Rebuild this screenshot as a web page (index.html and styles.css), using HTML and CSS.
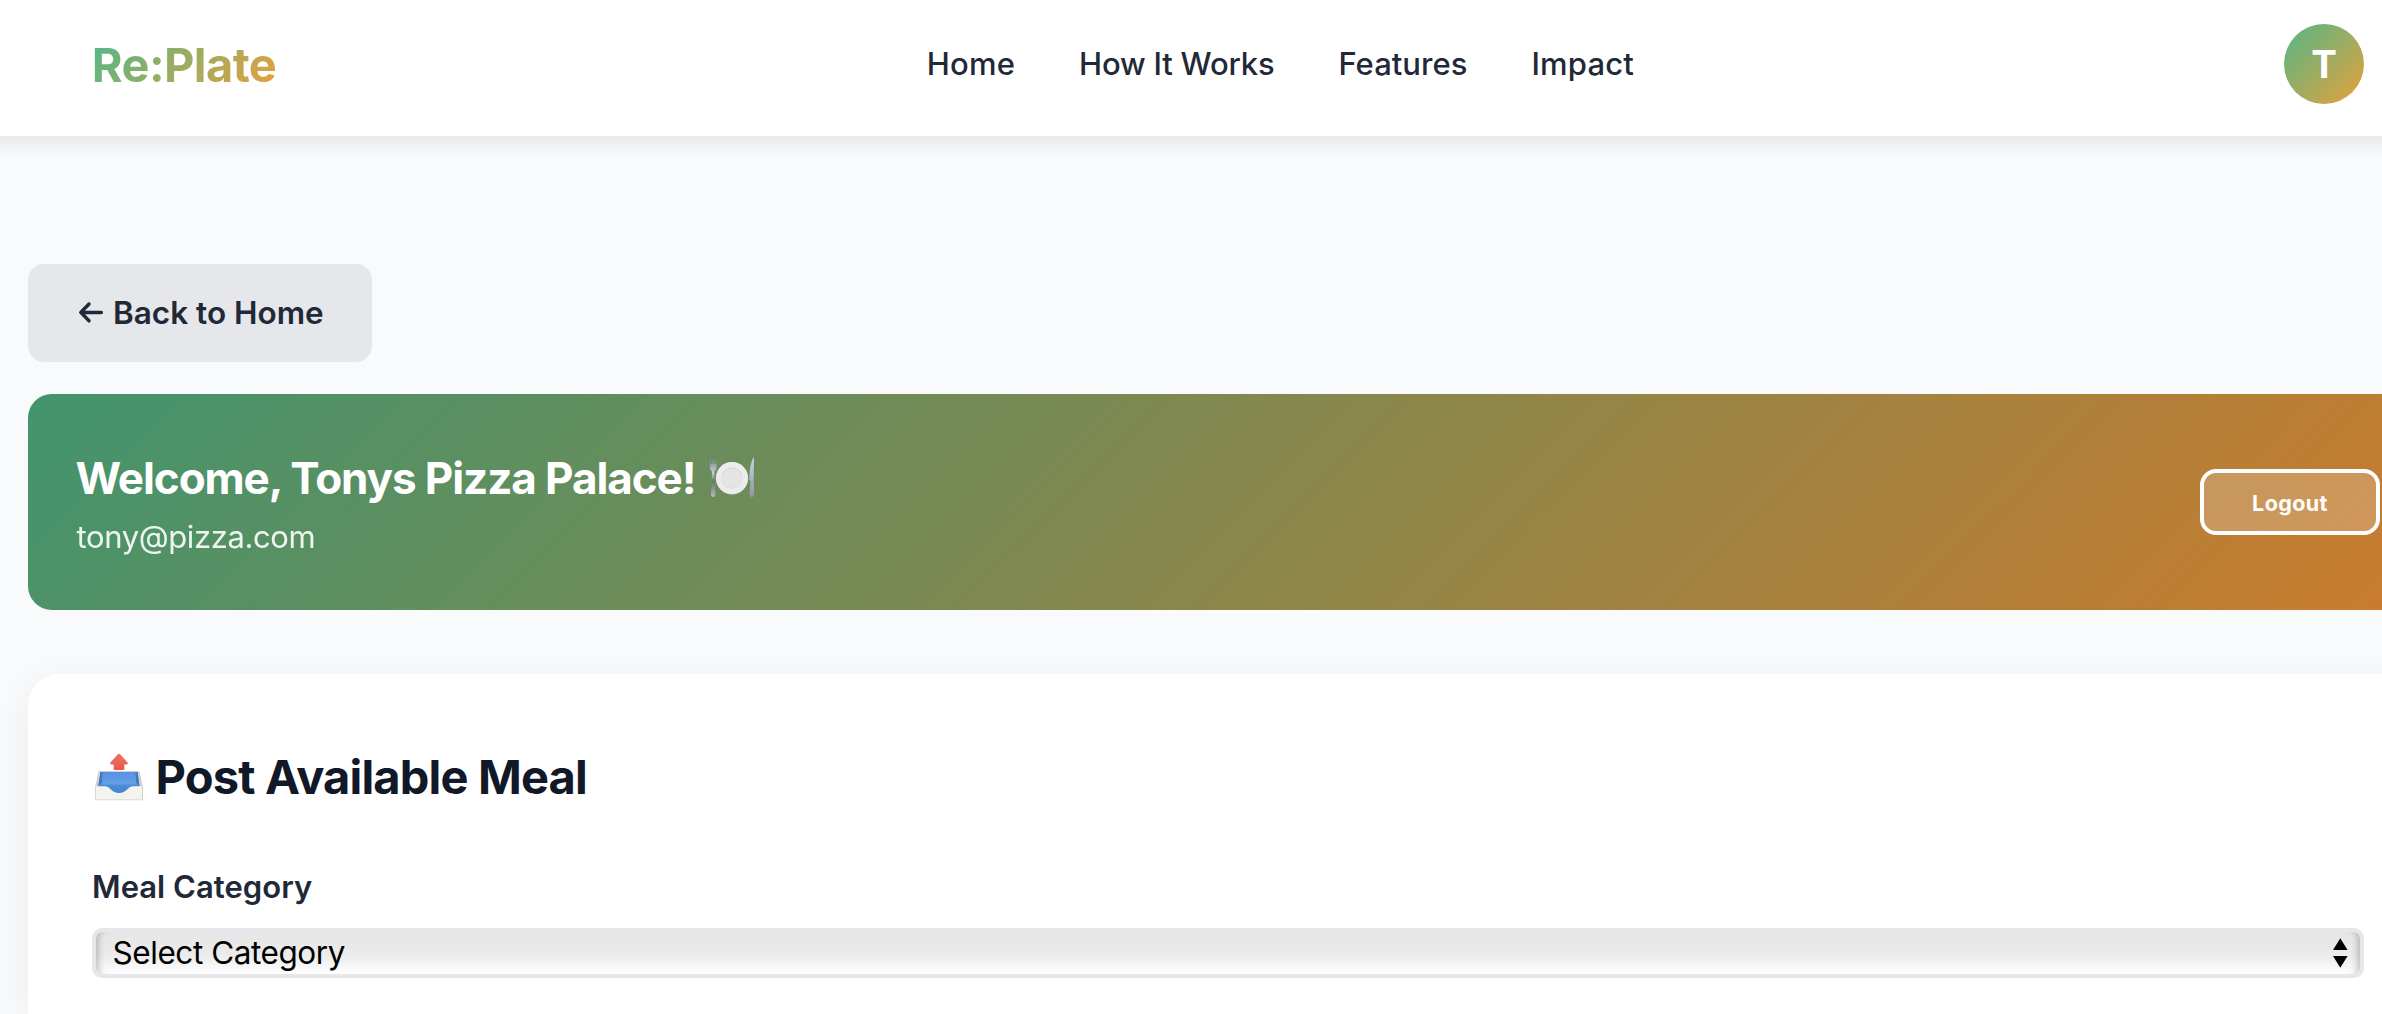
FILE: index.html
```
<!DOCTYPE html>
<html lang="en">
<head>
<meta charset="utf-8">
<title>Re:Plate</title>
<link rel="stylesheet" href="styles.css">
</head>
<body>
<header class="topbar">
  <div class="brand"><span class="logo">Re:Plate</span></div>
  <nav class="menu">
    <a class="menu-home">Home</a>
    <a class="menu-how">How It Works</a>
    <a class="menu-features">Features</a>
    <a class="menu-impact">Impact</a>
  </nav>
  <div class="avatar">T</div>
</header>

<main class="container">
  <button class="back" type="button">
    <svg class="back-arrow" viewBox="0 0 37 26" width="37" height="26" fill="none" stroke="currentColor" stroke-width="3.5" stroke-linecap="round" stroke-linejoin="round"><path d="M13 4 L4.8 12.4 L13 20.8 M5.5 12.4 H25.3"/></svg><span class="back-text">Back to Home</span>
  </button>

  <section class="banner">
    <div>
      <h1 class="welcome"><span>Welcome, Tonys Pizza Palace!</span>
        <svg class="plate" viewBox="0 0 46 42" width="46" height="42">
          <defs>
            <linearGradient id="metal" x1="0" y1="0" x2="0" y2="1"><stop offset="0" stop-color="#6d7a76"/><stop offset=".4" stop-color="#c4cfdf"/><stop offset=".6" stop-color="#6c746f"/><stop offset="1" stop-color="#b3b8c3"/></linearGradient>
            <linearGradient id="blade" x1="0" y1="0" x2="0" y2="1"><stop offset="0" stop-color="#c5d5e6"/><stop offset=".6" stop-color="#a5b1bd"/><stop offset="1" stop-color="#92959b"/></linearGradient>
          </defs>
          <path fill="url(#metal)" d="M.8 1 H1.9 V8 H2.9 V1 H3.9 V8 H4.9 V1 H5.9 V8 H6.8 V1 H7.6 V11.5 Q7.6 14 5.5 15 V26 L6.5 38.5 Q6.5 41 4.2 41 Q1.9 41 1.9 38.5 L2.9 26 V15 Q.8 14 .8 11.5Z"/>
          <circle cx="23" cy="22.3" r="16.2" fill="#c9ced0"/>
          <circle cx="23" cy="22" r="15.9" fill="#ececec"/>
          <circle cx="23" cy="22" r="10.6" fill="#d4dade"/>
          <circle cx="23" cy="22.4" r="9.8" fill="#e4e4e4"/>
          <path fill="url(#blade)" d="M45 1 Q40.5 6 40.2 24 L41.5 25 L40.6 39 Q40.6 41 42.7 41 Q45.2 41 45.2 39 L44.7 25Z"/>
        </svg>
      </h1>
      <p class="email">tony@pizza.com</p>
    </div>
    <button class="logout" type="button">Logout</button>
  </section>

  <section class="card">
    <h2 class="card-title">
      <svg class="tray" viewBox="0 0 48 48" width="48" height="48">
        <defs>
          <linearGradient id="arrow" x1="0" y1="0" x2="0" y2="1"><stop offset="0" stop-color="#ef7364"/><stop offset="1" stop-color="#e75849"/></linearGradient>
          <linearGradient id="well" x1="0" y1="0" x2="0" y2="1"><stop offset="0" stop-color="#5592e2"/><stop offset=".54" stop-color="#659fea"/><stop offset=".6" stop-color="#4e8bd8"/><stop offset="1" stop-color="#4481cf"/></linearGradient>
        </defs>
        <path fill="#d0d1cd" d="M3.5 18 H44.5 L48 34 V47.3 H.2 V34Z"/>
        <path fill="url(#well)" d="M5.5 19 H42.5 L44.5 33.5 L38 41 H10 L3.3 33.5Z"/>
        <path fill="#3f78c2" d="M5.5 19 L7.5 19 L6.8 30 L3.3 33Z M42.5 19 H40.5 L41.2 30 L44.5 33Z"/>
        <path fill="#f3f3ef" d="M1 33.2 H9.5 C15.5 33.2 16.5 40 24 40 C31.5 40 32.5 33.2 38.5 33.2 H47 V46.5 H1Z"/>
        <path fill="url(#arrow)" d="M24 .8 Q24.7 .8 25.4 1.6 L32.3 9.2 Q33.5 11 31.8 11.4 H29.3 V17 H18.7 V11.4 H16.2 Q14.5 11 15.7 9.2 L22.6 1.6 Q23.3 .8 24 .8Z"/>
      </svg><span>Post Available Meal</span>
    </h2>
    <div class="label">Meal Category</div>
    <div class="select">
      <span>Select Category</span>
      <svg viewBox="0 0 15 30" width="15" height="30"><path d="M7.3 .3 L14.6 12 H0Z M0 18 H14.6 L7.3 29.7Z"/></svg>
    </div>
  </section>
</main>
</body>
</html>
```
FILE: styles.css
```
* { box-sizing: border-box; }
body {
  display: flex;
  flex-direction: column;
  height: 1014px;
  margin: 0;
  overflow: hidden;
  background: #f9fafc;
  color: #1f2937;
  font-family: Inter, "Liberation Sans", sans-serif;
}
h1, h2, p { margin: 0; }
button { font-family: inherit; margin: 0; }

.topbar {
  display: grid;
  grid-template-columns: 834.9px auto 1fr;
  align-items: center;
  flex: none;
  height: 136px;
  margin: 0 -20px;
  padding: 24px 38px 32px 111.8px;
  background: #fff;
  box-shadow: 0 8px 16px 1px rgba(0, 0, 0, .08);
}
.brand { display: flex; padding-top: 2px; }
.logo {
  font-size: 47px;
  font-weight: 700;
  line-height: 56px;
  letter-spacing: -.603px;
  background: linear-gradient(135deg, #52b788, #e9a03b);
  -webkit-background-clip: text;
  background-clip: text;
  color: transparent;
}
.menu {
  display: flex;
  gap: 64px;
  font-size: 31px;
  font-weight: 540;
  line-height: 40px;
  white-space: nowrap;
}
.menu-home { letter-spacing: .2px; }
.menu-how { letter-spacing: -.2px; }
.menu-features { letter-spacing: .04px; }
.menu-impact { letter-spacing: .15px; }
.avatar {
  justify-self: end;
  width: 80px;
  height: 80px;
  border-radius: 50%;
  background: linear-gradient(135deg, #52b788, #e9a03b);
  color: #fff;
  font-size: 38.5px;
  font-weight: 650;
  line-height: 80px;
  text-align: center;
}

.container {
  flex: 1;
  display: flex;
  flex-direction: column;
  min-height: 0;
  width: 2400px;
  margin: 128px 0 0 28px;
}

.back {
  display: flex;
  align-items: center;
  flex: none;
  width: 344px;
  height: 98px;
  padding: 0 0 0 48px;
  border: 0;
  border-radius: 16px;
  background: #e5e7eb;
  color: #1f2937;
  font-size: 31.5px;
  font-weight: 620;
  white-space: nowrap;
}
.back-text { padding-bottom: 2px; }

.banner {
  display: flex;
  justify-content: space-between;
  align-items: center;
  flex: none;
  height: 216px;
  margin-top: 32px;
  padding: 48px 48px 51px 47.5px;
  border-radius: 24px;
  background: linear-gradient(135deg, #42946d, #cb7b2d);
  color: #fff;
}
.welcome {
  display: flex;
  align-items: center;
  height: 72px;
  font-size: 44px;
  font-weight: 700;
  line-height: 72px;
  letter-spacing: -1.09px;
}
.plate { margin: 0 0 2px 14px; }
.email {
  padding-left: 1px;
  font-size: 31px;
  line-height: 45px;
  letter-spacing: -.386px;
  opacity: .9;
}
.logout {
  width: 180px;
  height: 66px;
  margin-top: 3px;
  padding: 1px 0 0;
  border: 4px solid #fff;
  border-radius: 16px;
  background: rgba(255, 255, 255, .2);
  background-clip: padding-box;
  color: #fff;
  font-size: 21.5px;
  font-weight: 700;
  letter-spacing: .4px;
}

.card {
  flex: 1;
  min-height: 0;
  margin-top: 64px;
  padding: 64px 64px 0;
  border-radius: 32px 32px 0 0;
  background: #fff;
  box-shadow: 0 8px 40px rgba(0, 0, 0, .06);
}
.card-title {
  display: flex;
  align-items: center;
  height: 76px;
  margin-bottom: 53px;
  padding-left: 3px;
  color: #111827;
  font-size: 47px;
  font-weight: 700;
  letter-spacing: -.82px;
}
.tray { margin: 1px 12.6px 0 0; }
.label {
  font-size: 31px;
  font-weight: 600;
  line-height: 40px;
  letter-spacing: .032px;
}
.select {
  display: flex;
  justify-content: space-between;
  align-items: center;
  height: 50px;
  margin-top: 21px;
  padding: 0 12px 0 16.6px;
  border: 4px solid #e5e7eb;
  border-radius: 10px;
  background: linear-gradient(#e6e6e6, #ebebeb 55%, #fff) padding-box;
  box-shadow: inset 9px 0 6px -6px rgba(0, 0, 0, .2), inset -9px 0 6px -6px rgba(0, 0, 0, .2);
  color: #000;
  font-size: 31.5px;
  line-height: 40px;
  letter-spacing: -.45px;
}
```
